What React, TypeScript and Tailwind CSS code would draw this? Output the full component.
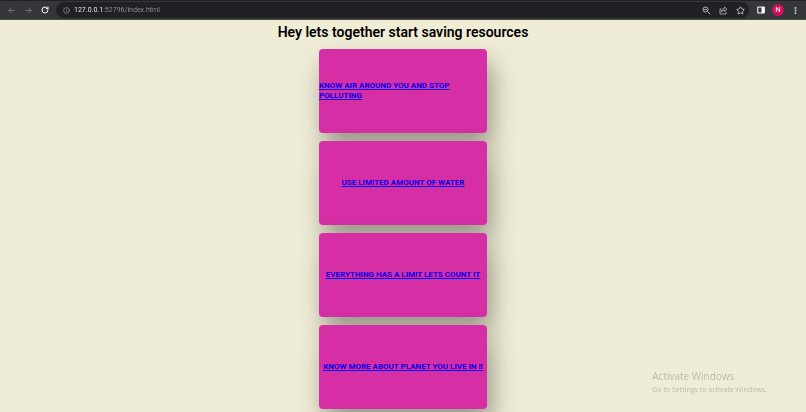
import {
  ArrowLeft,
  ArrowRight,
  EllipsisVertical,
  Info,
  RotateCw,
  Star,
} from "lucide-react";

const cards = [
  { label: "KNOW AIR AROUND YOU AND STOP POLLUTING", href: "#air" },
  { label: "USE LIMITED AMOUNT OF WATER", href: "#water" },
  { label: "EVERYTHING HAS A LIMIT LETS COUNT IT", href: "#limit" },
  { label: "KNOW MORE ABOUT PLANET YOU LIVE IN !!", href: "#planet" },
];

function BrowserBar() {
  return (
    <header className="flex h-5 items-center border-t border-b border-t-[#202124] border-b-[#48483f] bg-[#35363a] text-[#dfe1e5]">
      <div className="flex w-14 shrink-0 items-center gap-2 pl-[7px]">
        <button type="button" aria-label="Back" className="text-[#85878b]">
          <ArrowLeft size={9} strokeWidth={2} />
        </button>
        <button type="button" aria-label="Forward" className="text-[#85878b]">
          <ArrowRight size={9} strokeWidth={2} />
        </button>
        <button type="button" aria-label="Reload" className="text-white">
          <RotateCw size={8} strokeWidth={3} />
        </button>
      </div>

      <div className="flex h-4 min-w-0 flex-1 items-center rounded-full bg-[#202124] pr-1 pl-[7px]">
        <Info size={7} strokeWidth={2} className="shrink-0 text-[#a5a8ad]" />
        <input
          type="text"
          aria-label="Address"
          defaultValue="127.0.0.1:52796/index.html"
          className="ml-1 h-3 min-w-0 flex-1 bg-linear-to-r from-white from-[29px] to-[#8f9297] to-[29px] bg-clip-text text-[7px] text-transparent outline-none"
        />
        <div className="flex items-center gap-2 text-[#b8babf]">
          <button type="button" aria-label="Zoom">
            <ZoomIcon />
          </button>
          <button type="button" aria-label="Share this page">
            <ShareIcon />
          </button>
          <button type="button" aria-label="Bookmark" className="text-[#dfe1e5]">
            <Star size={9} strokeWidth={2} />
          </button>
        </div>
      </div>

      <div className="flex shrink-0 items-center gap-[7px] pr-1.5 pl-2">
        <button type="button" aria-label="Side panel">
          <SidePanelIcon />
        </button>
        <button
          type="button"
          aria-label="Profile"
          className="flex size-3 items-center justify-center rounded-full bg-[#d0105c] text-[7px] leading-none text-white"
        >
          N
        </button>
        <button type="button" aria-label="Menu">
          <EllipsisVertical size={9} strokeWidth={3} />
        </button>
      </div>
    </header>
  );
}

function ZoomIcon() {
  return (
    <svg width="9" height="9" viewBox="0 0 18 18" fill="none" stroke="currentColor" strokeWidth="2">
      <circle cx="7" cy="7" r="5" />
      <path d="M11 11l5.500 5.500M4.500 7h5" />
    </svg>
  );
}

function ShareIcon() {
  return (
    <svg width="9" height="9" viewBox="0 0 18 18" fill="none" stroke="currentColor" strokeWidth="1.6">
      <path d="M5 6H2v10h12v-4" />
      <path d="M11 2l5 4.500-5 4.500V8.500c-3 0-5 1-6 3.500 0-4 2-7 6-7.500z" />
    </svg>
  );
}

function SidePanelIcon() {
  return (
    <svg width="8" height="8" viewBox="0 0 16 16" fill="none">
      <path d="M1.500 2h13v12h-13z" stroke="#fff" strokeWidth="2" />
      <path d="M9 2h6v12H9z" fill="#fff" />
    </svg>
  );
}

function Card({ label, href }: { label: string; href: string }) {
  return (
    <div className="flex h-21 w-42 items-center justify-center rounded bg-[#d62fa5] shadow-[5px_14px_26px_rgba(0,0,0,0.37)]">
      <a
        href={href}
        className="text-[8px] leading-[10px] font-bold text-[#0000ee] underline"
      >
        {label}
      </a>
    </div>
  );
}

export default function App() {
  return (
    <div className="min-h-screen bg-[#f0edd7] font-[Roboto,sans-serif]">
      <BrowserBar />
      <main className="flex flex-col items-center pt-1">
        <h1 className="mb-[9px] text-[14px] leading-4 font-semibold text-black">
          Hey lets together start saving resources
        </h1>
        <div className="flex flex-col gap-2">
          {cards.map((card) => (
            <Card key={card.href} label={card.label} href={card.href} />
          ))}
        </div>
      </main>

      {/* Desktop activation notice */}
      <aside className="fixed right-[39px] bottom-4 font-['Open_Sans',sans-serif] text-[#bcbaaa]">
        <p className="text-[10px] leading-4">Activate Windows</p>
        <p className="text-[7px] leading-3">Go to Settings to activate Windows.</p>
      </aside>
    </div>
  );
}
